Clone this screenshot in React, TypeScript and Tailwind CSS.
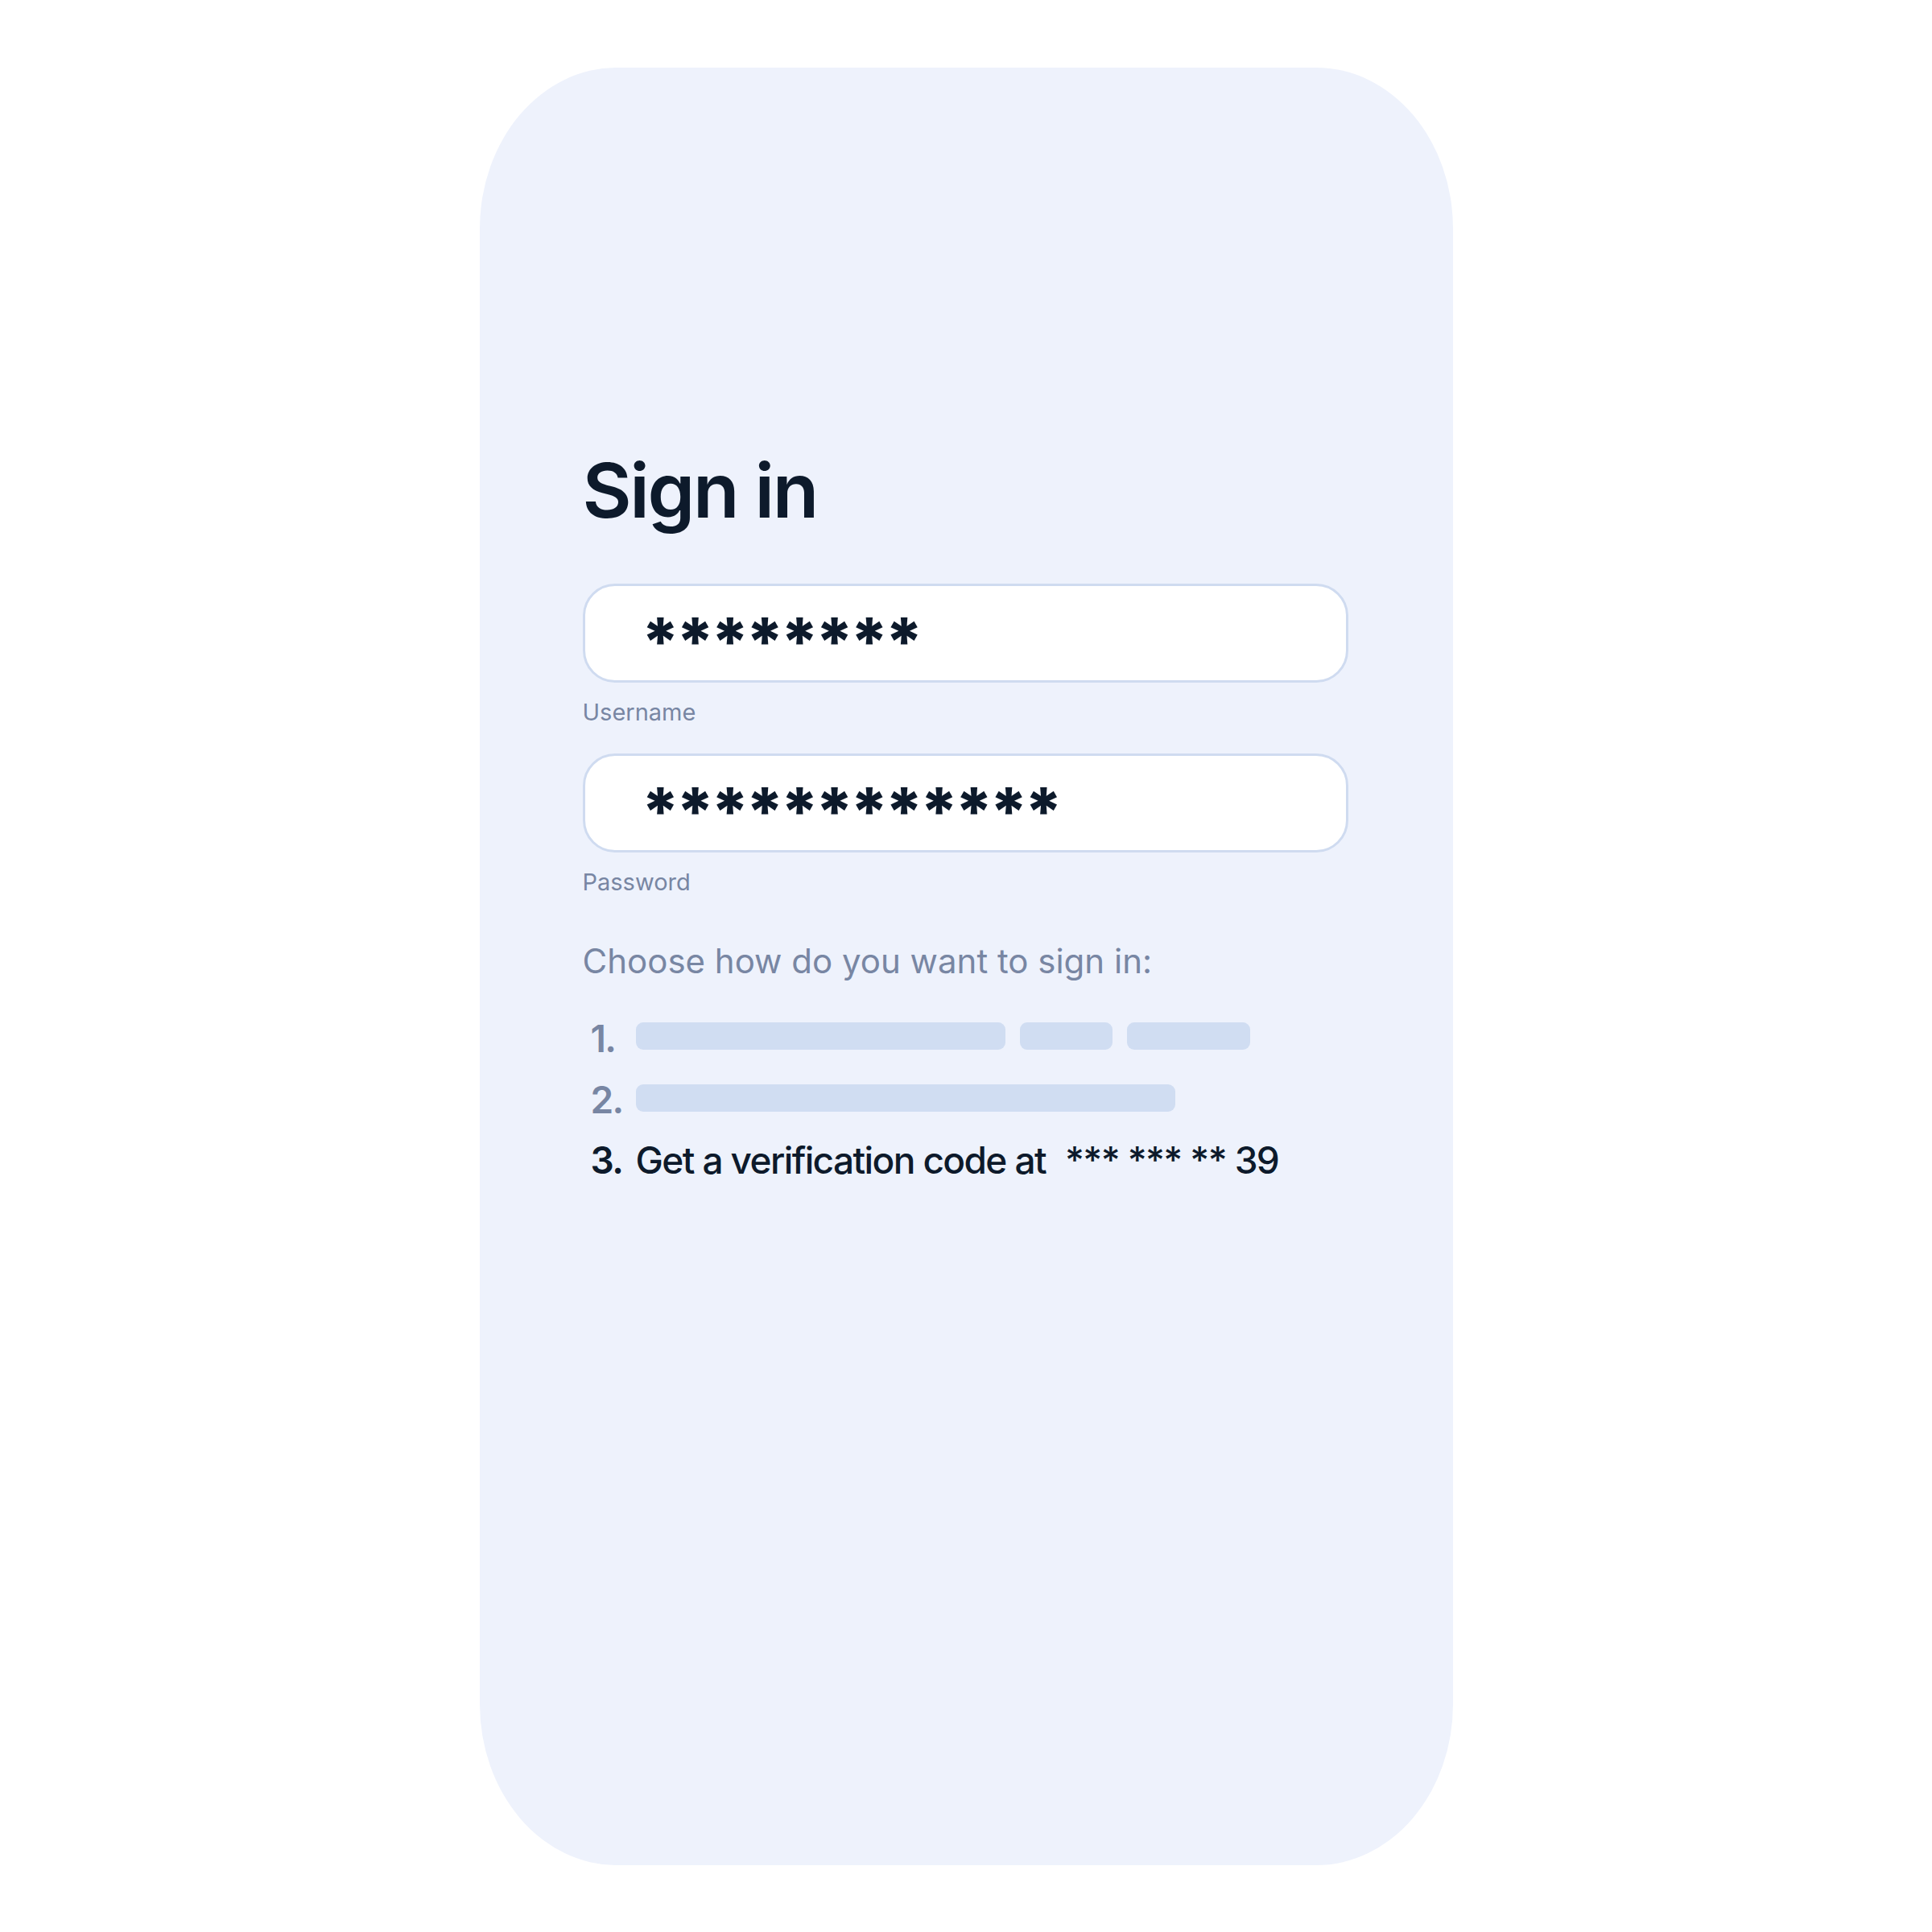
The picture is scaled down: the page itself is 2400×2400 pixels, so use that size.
import React from "react";

const font = { fontFamily: "Inter, 'Noto Sans', sans-serif" };

function Field({ value, label }: { value: string; label: string }) {
    return (
        <div className="flex flex-col">
            <div className="h-[123px] w-[951px] bg-white border-[3px] border-[#cfdbf0] rounded-[40px] flex items-center pl-[70px]">
                <span className="text-[82px] font-extrabold text-[#0d1a2b] tracking-[-4.5px] leading-none pt-[24px]">{value}</span>
            </div>
            <span className="mt-[20px] text-[29px] leading-[34px] text-[#7886a3]">{label}</span>
        </div>
    );
}

function Bar({ w }: { w: string }) {
    return <div className={`h-[34px] rounded-[9px] bg-[#d0ddf2] ${w}`} />;
}

export default function App() {
    return (
        <div className="w-[2400px] h-[2400px] bg-white flex items-center justify-center" style={font}>
            <div className="w-[1209px] h-[2233px] bg-[#eef2fc] rounded-[170px_/_200px] pl-[128px] pt-[478px]">
                <h1 className="text-[94px] leading-none font-semibold tracking-tight text-[#0d1a2b]">Sign in</h1>

                <div className="mt-[69px] flex flex-col gap-[34px]">
                    <Field value="********" label="Username" />
                    <Field value="************" label="Password" />
                </div>

                <p className="mt-[56px] text-[42px] leading-[50px] font-normal text-[#7886a3]">
                    Choose how do you want to sign in:
                </p>

                <ol className="mt-[30px] flex flex-col text-[46px] font-semibold tracking-[-0.035em]">
                    <li className="h-[77px] flex items-center">
                        <span className="w-[66px] pl-[10px] pt-[6px] text-[#7886a3]">1.</span>
                        <div className="flex gap-[18px]">
                            <Bar w="w-[459px]" />
                            <Bar w="w-[115px]" />
                            <Bar w="w-[153px]" />
                        </div>
                    </li>
                    <li className="h-[77px] flex items-center">
                        <span className="w-[66px] pl-[10px] pt-[4px] text-[#7886a3]">2.</span>
                        <Bar w="w-[670px]" />
                    </li>
                    <li className="h-[77px] flex items-center text-[#0d1a2b]">
                        <span className="w-[66px] pl-[10px]">3.</span>
                        <span className="font-medium">Get a verification code at</span>
                        <span className="ml-[24px] font-medium">*** *** ** 39</span>
                    </li>
                </ol>
            </div>
        </div>
    );
}
